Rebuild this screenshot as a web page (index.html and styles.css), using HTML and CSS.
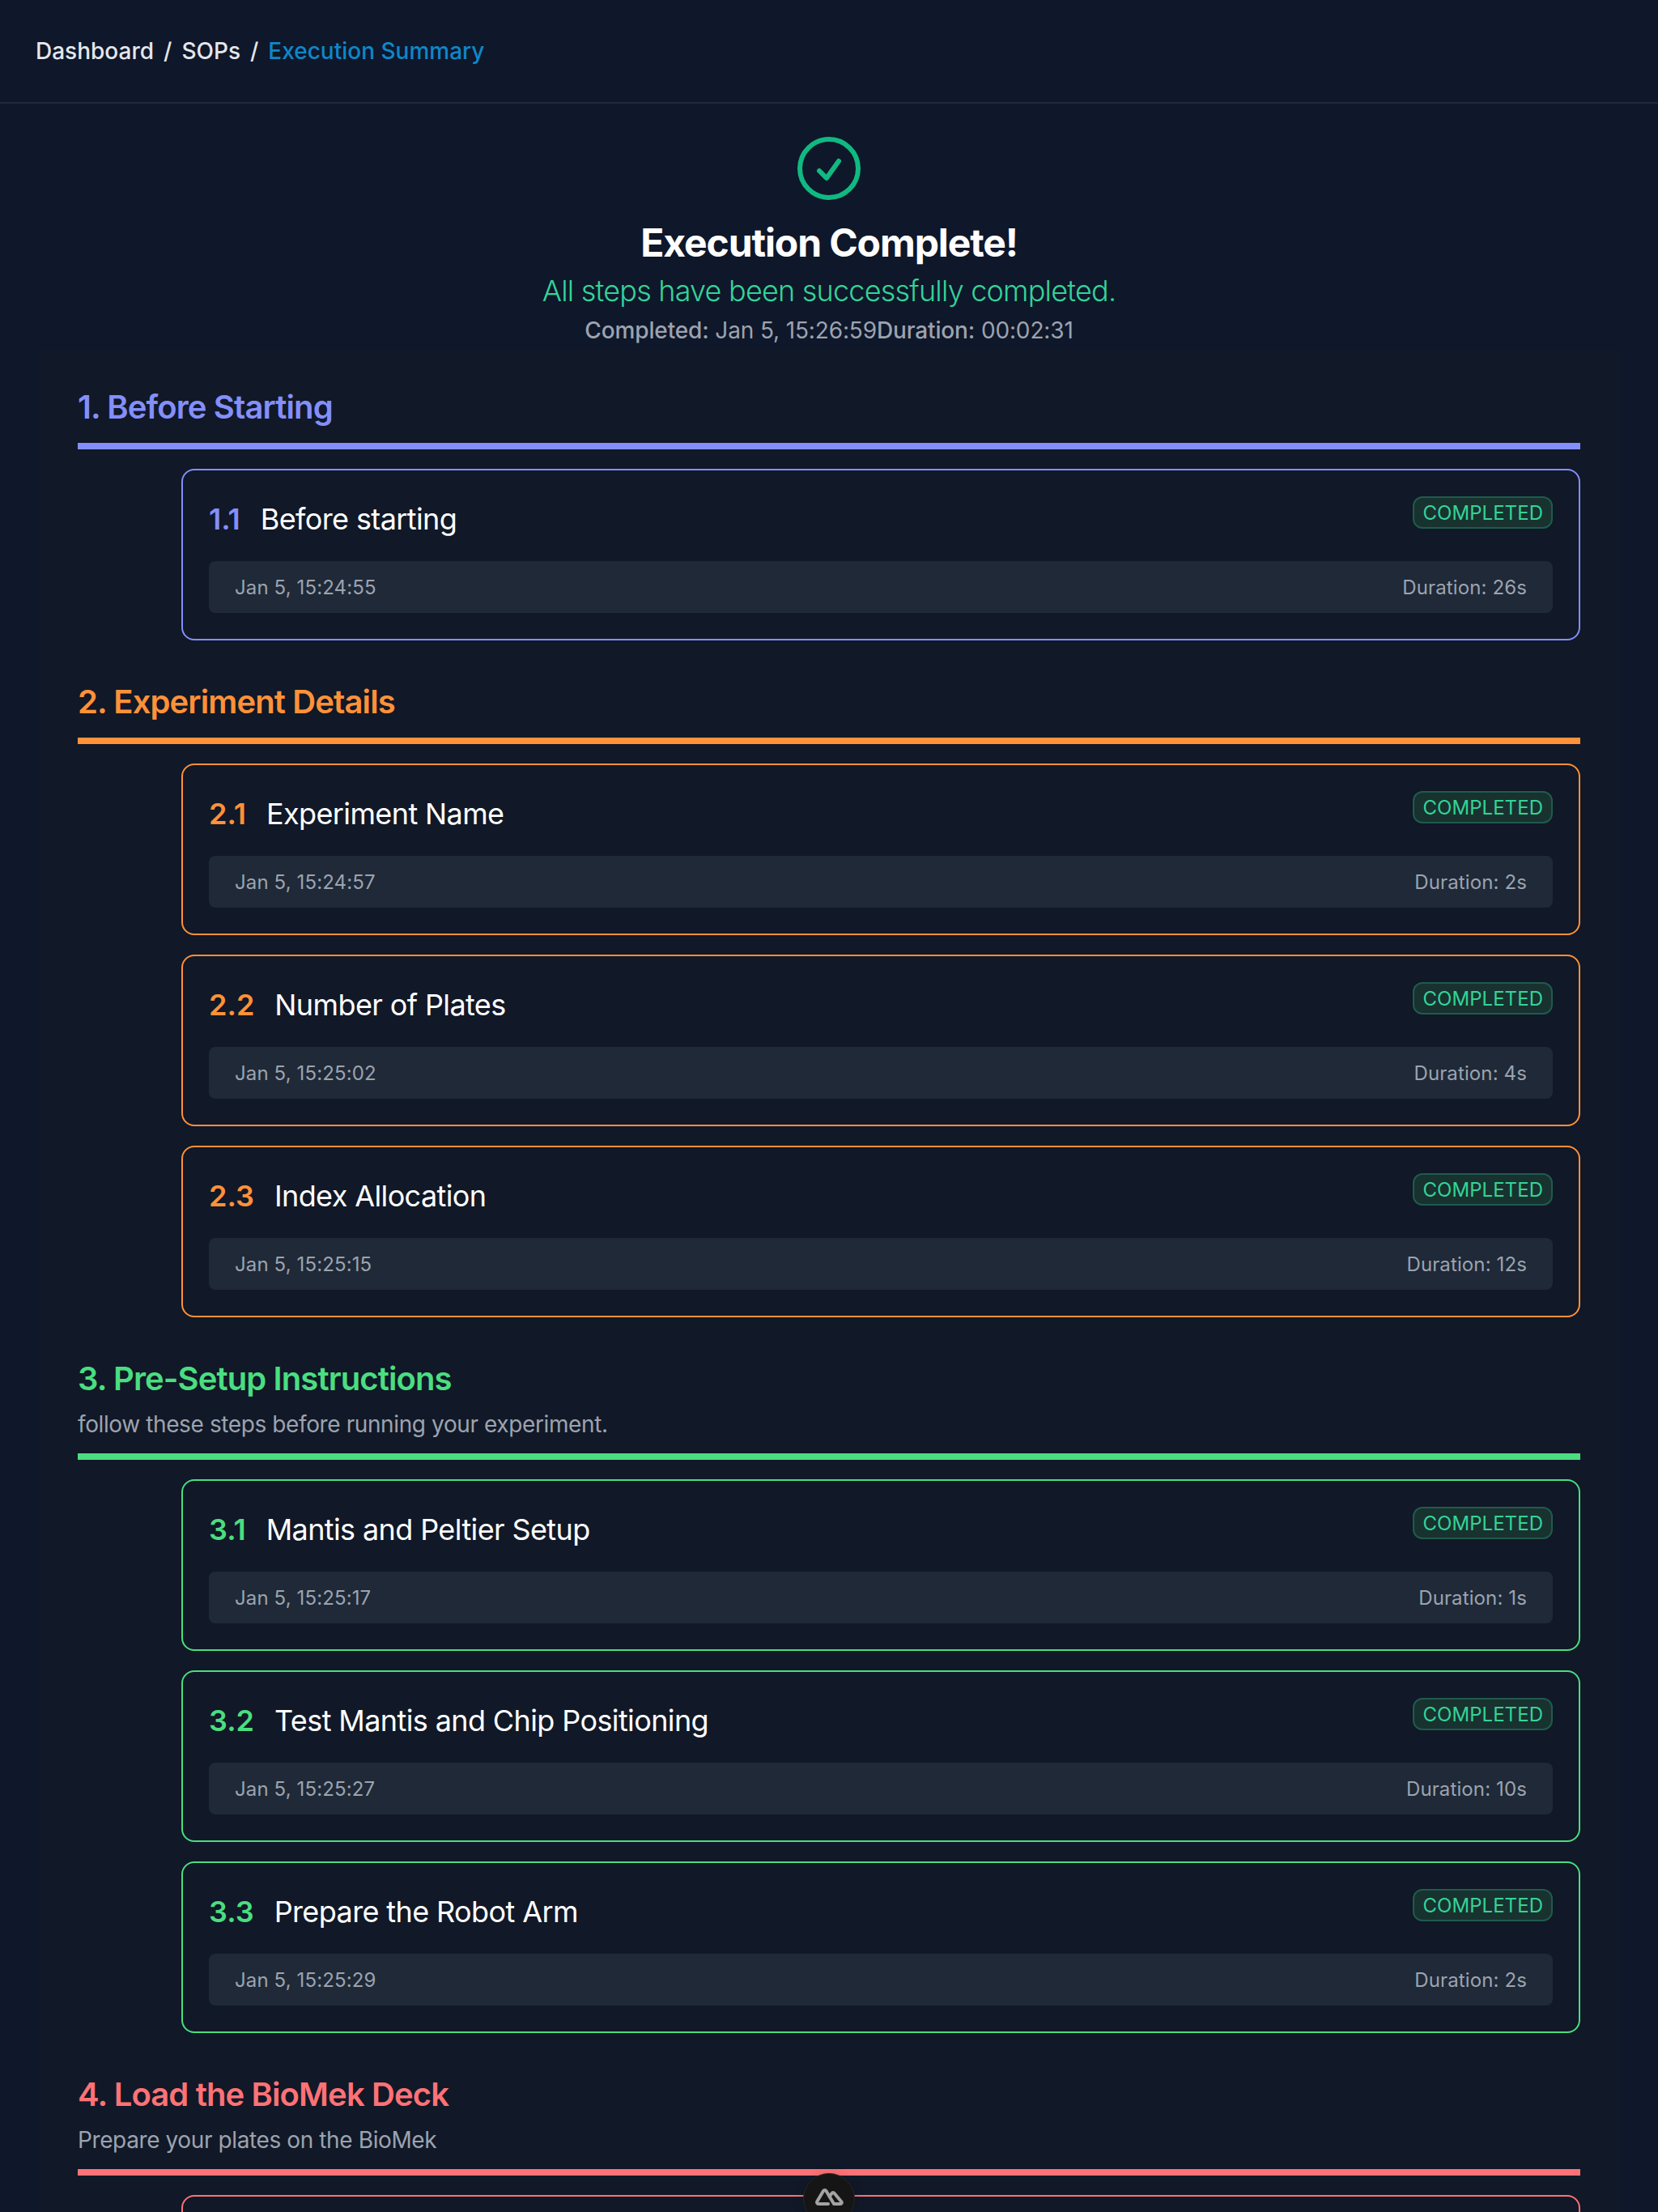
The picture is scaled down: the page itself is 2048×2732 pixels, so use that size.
FILE: index.html
```html
<!DOCTYPE html>
<html lang="en">
<head>
  <meta charset="UTF-8">
  <title>Execution Summary</title>
  <link rel="stylesheet" href="styles.css">
</head>
<body>

<header class="topbar">
  <nav class="crumbs">
    <a>Dashboard</a>
    <span>/</span>
    <a>SOPs</a>
    <span>/</span>
    <a class="current">Execution Summary</a>
  </nav>
</header>

<div class="hero">
  <svg class="hero-icon" viewBox="0 0 24 24" fill="none" stroke="currentColor" stroke-width="1.5" stroke-linecap="round" stroke-linejoin="round">
    <path d="M9 12.75 11.25 15 15 9.75M21 12a9 9 0 1 1-18 0 9 9 0 0 1 18 0Z"/>
  </svg>
  <h1>Execution Complete!</h1>
  <p class="hero-sub">All steps have been successfully completed.</p>
  <p class="hero-meta"><span><b>Completed:</b> Jan 5, 15:26:59</span><span><b>Duration:</b> 00:02:31</span></p>
</div>

<main class="summary">

  <section class="group indigo">
    <div class="group-head">
      <h2>1. Before Starting</h2>
    </div>
    <div class="steps">
      <div class="step">
        <div class="step-top">
          <h3><span class="num">1.1</span>Before starting</h3>
          <span class="badge">COMPLETED</span>
        </div>
        <div class="step-bar"><span>Jan 5, 15:24:55</span><span>Duration: 26s</span></div>
      </div>
    </div>
  </section>

  <section class="group orange">
    <div class="group-head">
      <h2>2. Experiment Details</h2>
    </div>
    <div class="steps">
      <div class="step">
        <div class="step-top">
          <h3><span class="num">2.1</span>Experiment Name</h3>
          <span class="badge">COMPLETED</span>
        </div>
        <div class="step-bar"><span>Jan 5, 15:24:57</span><span>Duration: 2s</span></div>
      </div>
      <div class="step">
        <div class="step-top">
          <h3><span class="num">2.2</span>Number of Plates</h3>
          <span class="badge">COMPLETED</span>
        </div>
        <div class="step-bar"><span>Jan 5, 15:25:02</span><span>Duration: 4s</span></div>
      </div>
      <div class="step">
        <div class="step-top">
          <h3><span class="num">2.3</span>Index Allocation</h3>
          <span class="badge">COMPLETED</span>
        </div>
        <div class="step-bar"><span>Jan 5, 15:25:15</span><span>Duration: 12s</span></div>
      </div>
    </div>
  </section>

  <section class="group green">
    <div class="group-head">
      <h2>3. Pre-Setup Instructions</h2>
      <p>follow these steps before running your experiment.</p>
    </div>
    <div class="steps">
      <div class="step">
        <div class="step-top">
          <h3><span class="num">3.1</span>Mantis and Peltier Setup</h3>
          <span class="badge">COMPLETED</span>
        </div>
        <div class="step-bar"><span>Jan 5, 15:25:17</span><span>Duration: 1s</span></div>
      </div>
      <div class="step">
        <div class="step-top">
          <h3><span class="num">3.2</span>Test Mantis and Chip Positioning</h3>
          <span class="badge">COMPLETED</span>
        </div>
        <div class="step-bar"><span>Jan 5, 15:25:27</span><span>Duration: 10s</span></div>
      </div>
      <div class="step">
        <div class="step-top">
          <h3><span class="num">3.3</span>Prepare the Robot Arm</h3>
          <span class="badge">COMPLETED</span>
        </div>
        <div class="step-bar"><span>Jan 5, 15:25:29</span><span>Duration: 2s</span></div>
      </div>
    </div>
  </section>

  <section class="group red">
    <div class="group-head">
      <h2>4. Load the BioMek Deck</h2>
      <p>Prepare your plates on the BioMek</p>
    </div>
    <div class="steps">
      <div class="step"></div>
    </div>
  </section>

</main>

<button class="dev-tab" aria-label="Nuxt DevTools">
  <svg viewBox="0 0 40 28" fill="none" stroke="currentColor" stroke-width="4" stroke-linecap="round" stroke-linejoin="round">
    <path d="M19 22H7c-1.600 0-2.500-1.600-1.700-3L13 6c.8-1.300 2.700-1.300 3.500 0l9 15"/>
    <path d="M20.700 13l2.800-4.200c.7-1 2.300-1 3 0l9 10.700c.9 1.300 0 2.500-1.500 2.500H26"/>
  </svg>
</button>

</body>
</html>
```
FILE: styles.css
```css
* {
  box-sizing: border-box;
}
html, body {
  height: 2732px;
  overflow: hidden;
}
body {
  margin: 0;
  font-family: Inter, "Liberation Sans", sans-serif;
  background-color: #0f172a;
  color: #fff;
}
h1, h2, h3, p {
  margin: 0;
}

.topbar {
  height: 128px;
  padding: 0 44px;
  display: flex;
  align-items: center;
  border-bottom: 2px solid #1f2937;
}
.crumbs {
  display: flex;
  gap: 12px;
  font-size: 28px;
  line-height: 40px;
  font-weight: 500;
  color: #e5e7eb;
}
.crumbs .current {
  color: #0e87c9;
}

.hero {
  padding-top: 32px;
  text-align: center;
}
.hero-icon {
  display: block;
  width: 96px;
  height: 96px;
  margin: 0 auto 12px;
  color: #10b981;
}
.hero h1 {
  font-size: 48px;
  line-height: 64px;
  font-weight: 700;
  letter-spacing: -0.023em;
}
.hero-sub {
  font-size: 36px;
  line-height: 54px;
  font-weight: 300;
  letter-spacing: -0.022em;
  color: #34d399;
}
.hero-meta {
  padding-top: 2px;
  font-size: 28px;
  line-height: 40px;
  letter-spacing: -0.005em;
  color: #9ca3af;
}
.hero-meta b {
  font-weight: 500;
}

.summary {
  margin: 4px 48px 0;
  padding: 0 48px;
  background-color: #111827;
}
.group {
  padding-top: 41px;
}
.group + .group {
  padding-top: 46px;
}
.group-head {
  padding-bottom: 16px;
  border-bottom: 8px solid var(--accent);
}
.group-head h2 {
  padding-top: 2px;
  font-size: 40px;
  line-height: 56px;
  font-weight: 600;
  letter-spacing: -0.022em;
  color: var(--accent);
}
.group-head p {
  margin-top: 8px;
  font-size: 28px;
  line-height: 40px;
  letter-spacing: -0.014em;
  color: #9ca3af;
}
.indigo { --accent: #838ffa; }
.orange { --accent: #ff9139; }
.green { --accent: #4ade80; }
.red { --accent: #fd7276; }

.steps {
  margin-top: 24px;
  margin-left: 128px;
  display: flex;
  flex-direction: column;
  gap: 24px;
}
.step {
  min-height: 212px;
  padding: 32px;
  border: 2px solid var(--accent);
  border-radius: 16px;
}
.step-top {
  display: flex;
  justify-content: space-between;
  align-items: flex-start;
  margin-bottom: 24px;
}
.step-top h3 {
  font-size: 36px;
  line-height: 56px;
  font-weight: 400;
  letter-spacing: -0.017em;
}
.num {
  margin-right: 25px;
  font-weight: 600;
  letter-spacing: 0;
  color: var(--accent);
}
.badge {
  padding: 3px 10px 1px;
  font-size: 24px;
  line-height: 32px;
  letter-spacing: 0.05px;
  color: #34d399;
  background: #18322f;
  border: 2px solid #1f5b4d;
  border-radius: 12px;
}
.step-bar {
  display: flex;
  justify-content: space-between;
  padding: 17px 32px 15px;
  font-size: 24px;
  line-height: 32px;
  letter-spacing: 0.005em;
  color: #9ca3af;
  background-color: #1f2937;
  border-radius: 8px;
}

.dev-tab {
  position: fixed;
  left: 992px;
  bottom: -16px;
  width: 64px;
  height: 64px;
  padding: 15px 0 0;
  display: flex;
  align-items: flex-start;
  justify-content: center;
  color: #a3a3a3;
  background: #151515;
  border: 1px solid #262626;
  border-radius: 32px;
  box-shadow: 0 2px 15px -3px rgba(0, 0, 0, 0.3);
}
.dev-tab svg {
  width: 40px;
  height: 28px;
}
```
